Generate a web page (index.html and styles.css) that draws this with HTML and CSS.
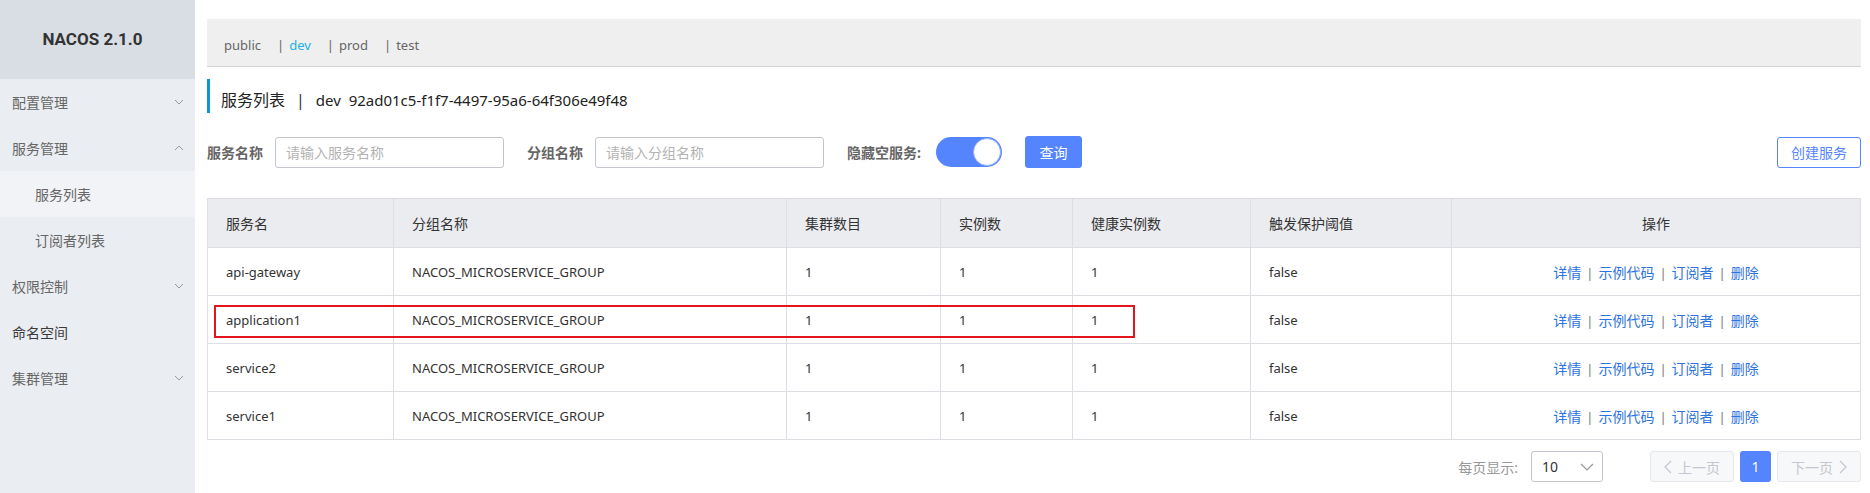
FILE: index.html
```html
<!DOCTYPE html>
<html lang="zh-CN">
<head>
<meta charset="utf-8">
<title>NACOS 2.1.0</title>
<link rel="stylesheet" href="styles.css">
</head>
<body>
<div class="app">
  <aside class="sidebar">
    <div class="logo">NACOS 2.1.0</div>
    <nav class="menu">
      <div class="menu-item"><span>配置管理</span><svg class="chev" viewBox="0 0 10 6" width="10" height="6"><polyline points="1,1 5,5 9,1"/></svg></div>
      <div class="menu-item"><span>服务管理</span><svg class="chev" viewBox="0 0 10 6" width="10" height="6"><polyline points="1,5 5,1 9,5"/></svg></div>
      <div class="sub-item active">服务列表</div>
      <div class="sub-item">订阅者列表</div>
      <div class="menu-item"><span>权限控制</span><svg class="chev" viewBox="0 0 10 6" width="10" height="6"><polyline points="1,1 5,5 9,1"/></svg></div>
      <div class="menu-item dark"><span>命名空间</span></div>
      <div class="menu-item"><span>集群管理</span><svg class="chev" viewBox="0 0 10 6" width="10" height="6"><polyline points="1,1 5,5 9,1"/></svg></div>
    </nav>
  </aside>

  <main class="main">
    <div class="ns-bar">
      <span class="ns">public</span>
      <span class="ns"><i class="sep">|</i><span class="cur">dev</span></span>
      <span class="ns"><i class="sep">|</i>prod</span>
      <span class="ns"><i class="sep">|</i>test</span>
    </div>

    <div class="page-title">
      <span class="cjk">服务列表</span><span class="tsep">|</span><span class="lat">dev&nbsp;&nbsp;92ad01c5-f1f7-4497-95a6-64f306e49f48</span>
    </div>

    <div class="search-row">
      <div class="filters">
        <label class="lbl">服务名称</label>
        <div class="input">请输入服务名称</div>
        <label class="lbl gap">分组名称</label>
        <div class="input">请输入分组名称</div>
        <label class="lbl gap">隐藏空服务:</label>
        <div class="switch"><span class="knob"></span></div>
        <button class="btn primary">查询</button>
      </div>
      <button class="btn outline">创建服务</button>
    </div>

    <div class="table-wrap">
      <table class="grid">
        <colgroup>
          <col class="w1"><col class="w2"><col class="w3"><col class="w4"><col class="w5"><col class="w6"><col class="w7">
        </colgroup>
        <thead>
          <tr><th>服务名</th><th>分组名称</th><th>集群数目</th><th>实例数</th><th>健康实例数</th><th>触发保护阈值</th><th class="center">操作</th></tr>
        </thead>
        <tbody>
          <tr><td>api-gateway</td><td>NACOS_MICROSERVICE_GROUP</td><td>1</td><td>1</td><td>1</td><td>false</td><td class="ops"><a>详情</a><i>|</i><a>示例代码</a><i>|</i><a>订阅者</a><i>|</i><a>删除</a></td></tr>
          <tr><td>application1</td><td>NACOS_MICROSERVICE_GROUP</td><td>1</td><td>1</td><td>1</td><td>false</td><td class="ops"><a>详情</a><i>|</i><a>示例代码</a><i>|</i><a>订阅者</a><i>|</i><a>删除</a></td></tr>
          <tr><td>service2</td><td>NACOS_MICROSERVICE_GROUP</td><td>1</td><td>1</td><td>1</td><td>false</td><td class="ops"><a>详情</a><i>|</i><a>示例代码</a><i>|</i><a>订阅者</a><i>|</i><a>删除</a></td></tr>
          <tr><td>service1</td><td>NACOS_MICROSERVICE_GROUP</td><td>1</td><td>1</td><td>1</td><td>false</td><td class="ops"><a>详情</a><i>|</i><a>示例代码</a><i>|</i><a>订阅者</a><i>|</i><a>删除</a></td></tr>
        </tbody>
      </table>
      <div class="highlight"></div>
    </div>

    <div class="pager">
      <span class="pg-label">每页显示:</span>
      <div class="select"><span>10</span><svg class="sel-chev" viewBox="0 0 14 8" width="14" height="8"><polyline points="1,1 7,7 13,1"/></svg></div>
      <button class="pg-btn disabled"><svg viewBox="0 0 8 14" width="8" height="14"><polyline points="7,1 1,7 7,13"/></svg>上一页</button>
      <button class="pg-num">1</button>
      <button class="pg-btn disabled">下一页<svg viewBox="0 0 8 14" width="8" height="14"><polyline points="1,1 7,7 1,13"/></svg></button>
    </div>
  </main>
</div>
</body>
</html>
```

FILE: styles.css
```css
* { box-sizing: border-box; }
html, body { margin: 0; padding: 0; }
body {
  font-family: "Noto Sans", "Noto Sans CJK SC", sans-serif;
  font-size: 13px;
  color: #333;
  background: #fff;
}
.app { display: flex; min-height: 493px; }

/* sidebar */
.sidebar { width: 195px; flex: 0 0 195px; background: #eaedf1; }
.logo {
  height: 79px; background: #d9dde4;
  display: flex; align-items: center; justify-content: center;
  font-family: Roboto, "Liberation Sans", sans-serif;
  font-weight: 700; font-size: 17px; color: #333;
  padding-right: 10px; padding-bottom: 2px;
}
.menu { display: flex; flex-direction: column; }
.menu-item {
  height: 46px; display: flex; align-items: center; justify-content: space-between;
  padding: 0 11px 0 12px; font-size: 14px; color: #666;
}
.menu-item.dark { color: #3a3a3a; }
.chev { fill: none; stroke: #999; stroke-width: 1; }
.sub-item { height: 46px; display: flex; align-items: center; padding-left: 35px; font-size: 14px; color: #666; }
.sub-item.active { background: #f2f3f7; }

/* main */
.main { flex: 1; padding: 19px 9px 0 12px; min-width: 0; }
.ns-bar {
  height: 48px; background: #efefef; border-bottom: 1px solid #d3d3d3;
  display: flex; align-items: center; gap: 16px; padding: 4px 0 0 17px;
  font-size: 13px; color: #666;
}
.ns .sep { font-style: normal; margin-right: 5px; }
.ns .cur { color: #22b0e3; }

.page-title {
  margin-top: 12px; height: 34px; border-left: 3px solid #0c97d0;
  padding: 9px 0 0 11px; line-height: 24px; color: #222;
  display: flex; align-items: baseline;
}
.page-title .cjk { font-size: 16px; }
.page-title .tsep { font-size: 16px; margin: 0 11px; color: #333; }
.page-title .lat { font-size: 15px; }

.search-row {
  margin-top: 23px; display: flex; justify-content: space-between; align-items: center; height: 32px;
}
.filters { display: flex; align-items: center; }
.lbl { font-size: 14px; font-weight: 700; color: #666; margin-right: 12px; }
.lbl.gap { margin-left: 23px; }
.input {
  width: 229px; height: 31px; border: 1px solid #c4c6cf; border-radius: 3px;
  padding-left: 10px; display: flex; align-items: center;
  font-size: 14px; color: #b3b3b3;
}
.switch {
  margin-left: 3px;
  width: 66px; height: 30px; border-radius: 15px; background: #5584ff;
  display: flex; align-items: center; justify-content: flex-end; padding-right: 1px;
}
.knob { width: 28px; height: 28px; border-radius: 50%; background: #fff; border: 1px solid #8fb0ff; }
.btn {
  font-family: inherit; font-size: 14px; height: 32px; border-radius: 3px; cursor: pointer;
}
.btn.primary { margin-left: 23px; width: 57px; background: #5584ff; color: #fff; border: 1px solid #5584ff; }
.btn.outline { width: 84px; height: 31px; background: #fff; color: #5584ff; border: 1px solid #5584ff; }

/* table */
.table-wrap { position: relative; margin-top: 30px; }
.grid { width: 100%; border-collapse: collapse; table-layout: fixed; }
.w1 { width: 186px; } .w2 { width: 393px; } .w3 { width: 154px; } .w4 { width: 132px; }
.w5 { width: 178px; } .w6 { width: 201px; } .w7 { width: auto; }
.grid th, .grid td {
  border: 1px solid #dcdee3; padding: 0 18px; text-align: left; white-space: nowrap;
}
.grid th { height: 49px; background: #ebecf0; font-weight: 400; font-size: 14px; color: #333; }
.grid td { height: 48px; font-size: 13px; color: #333; }
.grid th.center { text-align: center; }
.grid td.ops { text-align: center; font-size: 14px; }
.ops a { color: #2f74dd; }
.ops i { font-style: normal; color: #777; margin: 0 5px; font-size: 13px; }
.highlight {
  position: absolute; left: 7px; top: 107px; width: 921px; height: 33px;
  border: 2px solid #e3161f; pointer-events: none;
}

/* pager */
.pager { margin-top: 11px; display: flex; justify-content: flex-end; align-items: center; height: 31px; }
.pg-label { font-size: 14px; color: #999; margin-right: 13px; }
.select {
  width: 72px; height: 31px; border: 1px solid #c4c6cf; border-radius: 3px;
  display: flex; align-items: center; justify-content: space-between; padding: 0 8px 0 10px;
  font-size: 14px; color: #333;
}
.sel-chev, .pg-btn svg { fill: none; stroke: #999; stroke-width: 1.2; }
.pg-btn {
  margin-left: 47px; width: 84px; height: 31px; border: 1px solid #e6e7eb; border-radius: 3px;
  background: #f7f8fa; color: #c4c6cf; font-family: inherit; font-size: 14px;
  display: flex; align-items: center; justify-content: center; gap: 6px;
}
.pg-btn svg { stroke: #c4c6cf; }
.pg-num {
  margin-left: 6px; width: 31px; height: 31px; border: none; border-radius: 3px;
  background: #5584ff; color: #fff; font-family: inherit; font-size: 14px;
}
.pg-num + .pg-btn { margin-left: 6px; }
```
